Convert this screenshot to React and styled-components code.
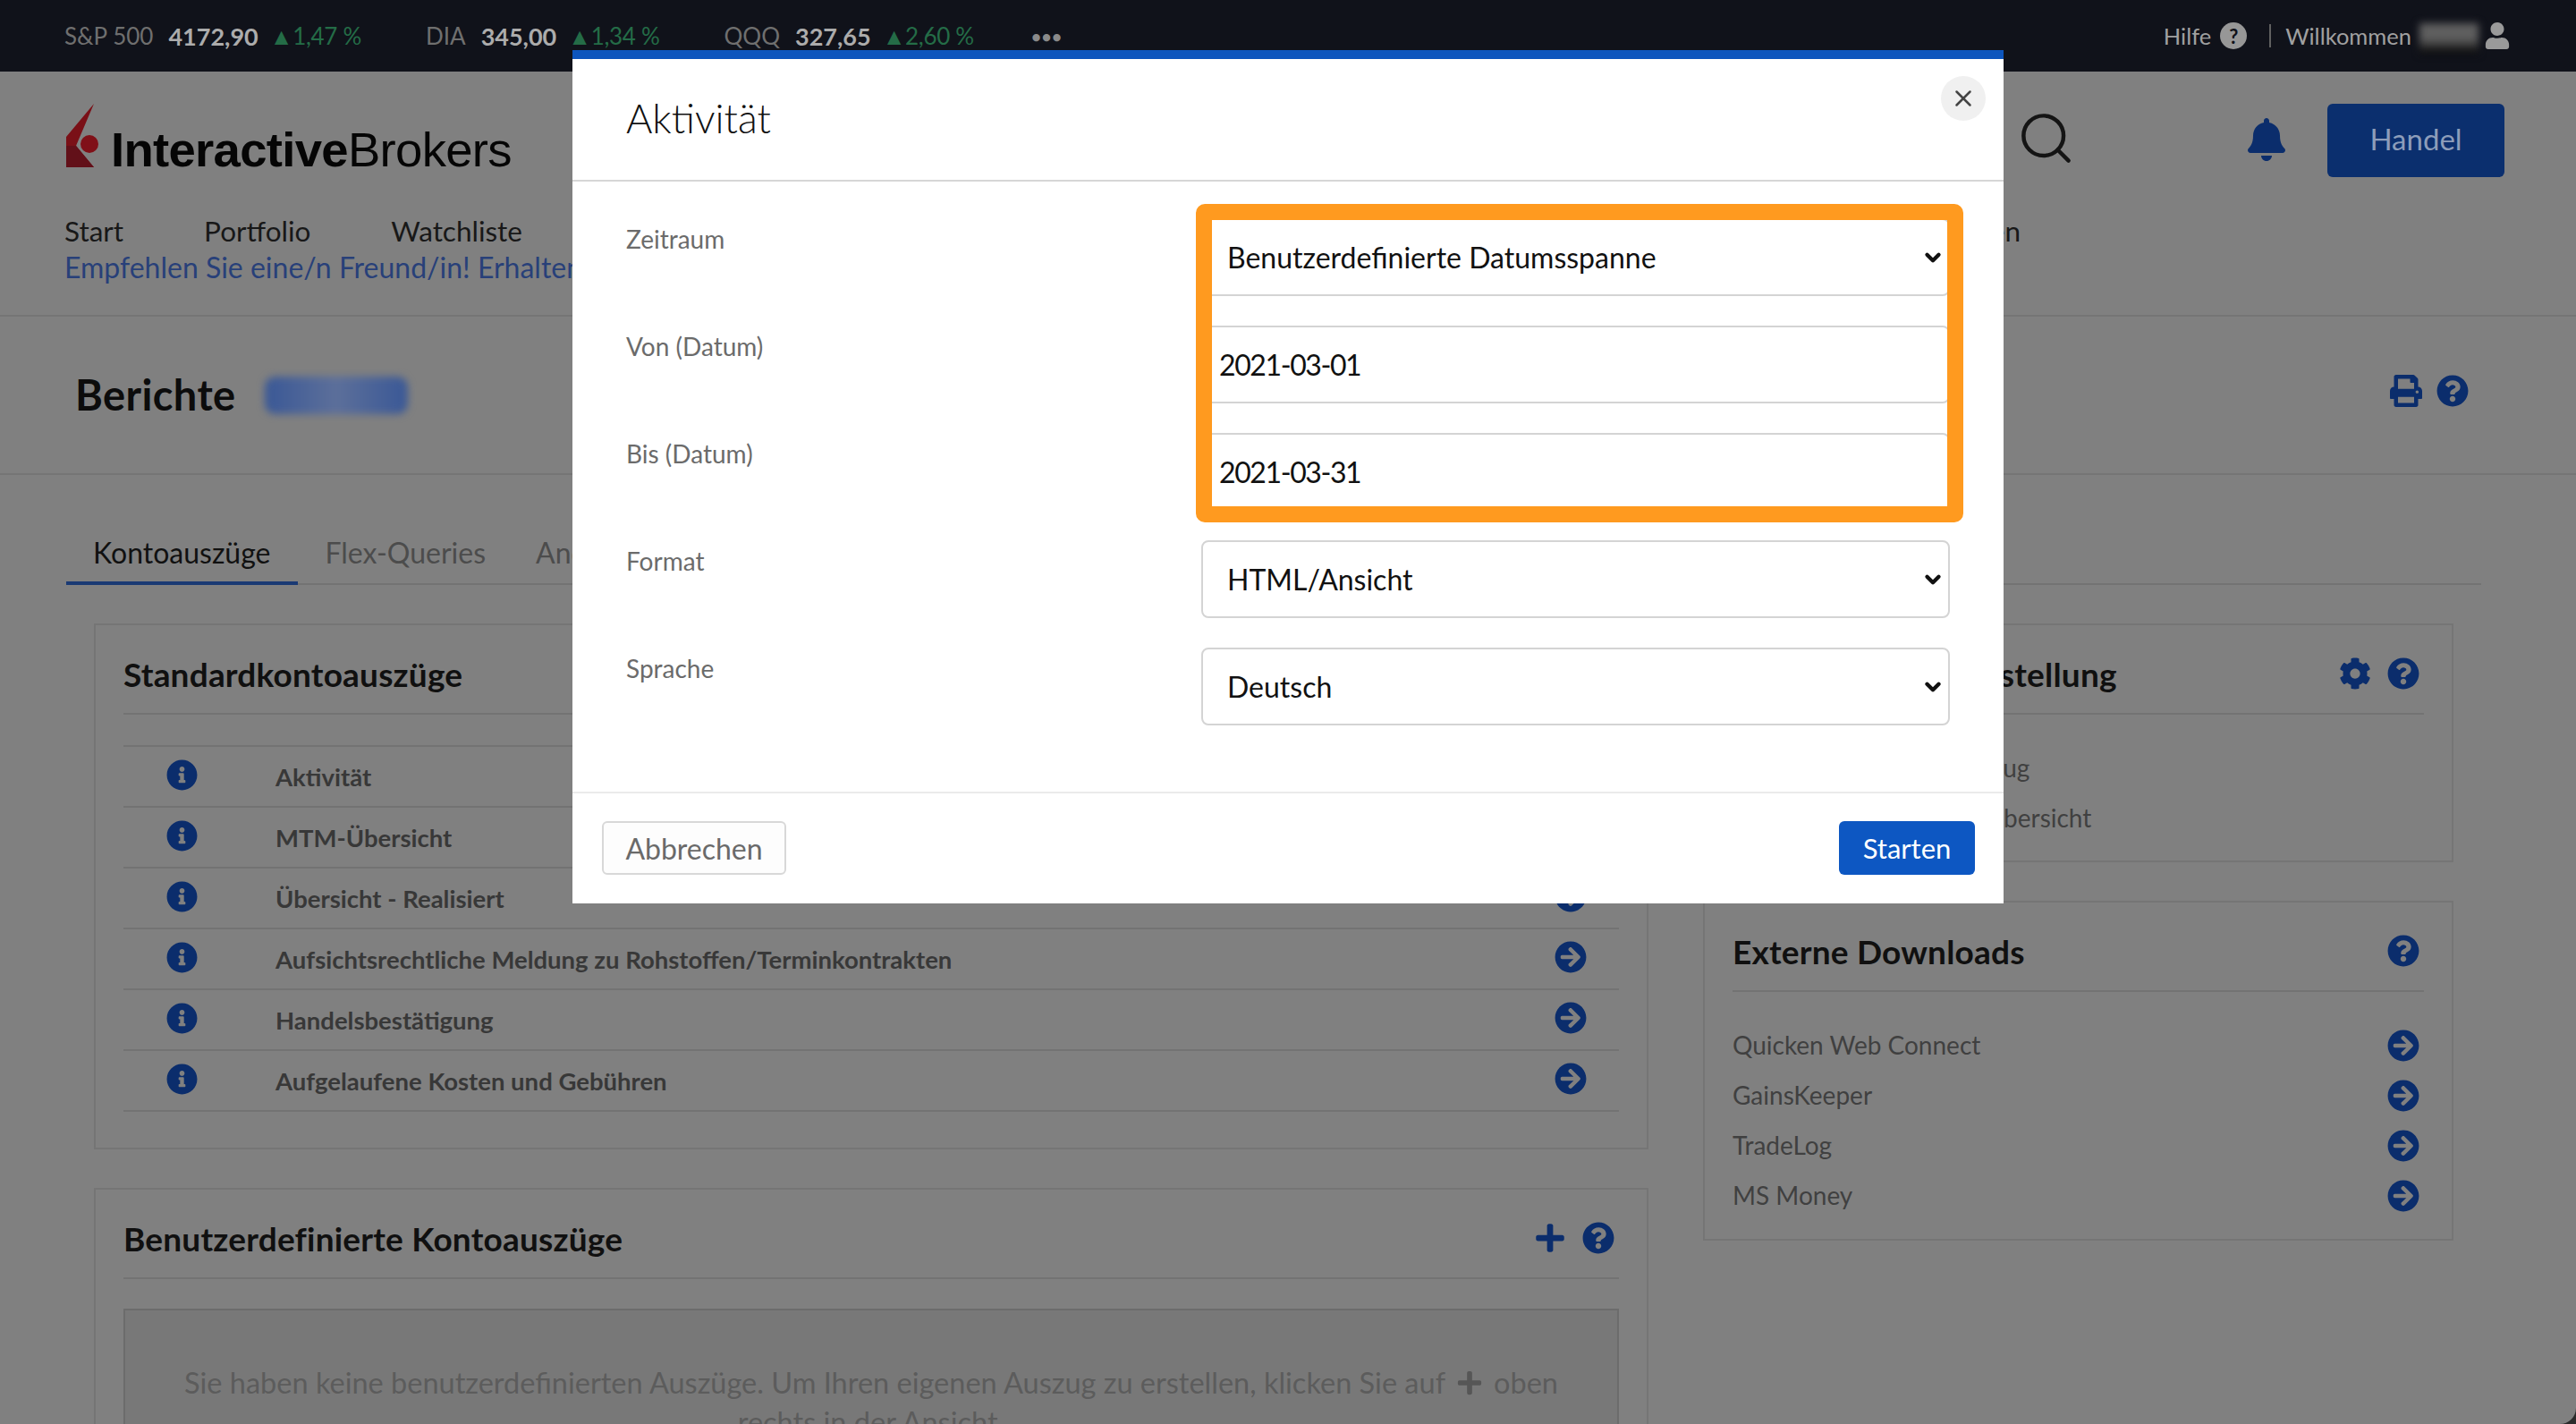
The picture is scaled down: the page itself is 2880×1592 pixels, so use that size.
import React from "react";
import styled, { createGlobalStyle } from "styled-components";
import {
  FaArrowCircleRight,
  FaBell,
  FaCog,
  FaInfoCircle,
  FaPlus,
  FaPrint,
  FaQuestionCircle,
  FaUser,
} from "react-icons/fa";
import { ChevronDown, Search, X } from "lucide-react";

const FONT = `Lato, "Open Sans", "Liberation Sans", sans-serif`;
const DIM_BLUE = "#0b2d6c";
const LINE = "#737373";

const GlobalStyle = createGlobalStyle`
  html, body {
    margin: 0;
    padding: 0;
    background: #2b2b2b;
  }
  * {
    box-sizing: border-box;
  }
`;

const Screen = styled.div`
  position: relative;
  width: 2880px;
  height: 1592px;
  overflow: hidden;
  background: #808080;
  border-bottom-right-radius: 18px;
  font-family: ${FONT};
`;

const TopBar = styled.div`
  display: flex;
  align-items: center;
  justify-content: space-between;
  height: 80px;
  padding: 0 73px 0 72px;
  background: #10121a;
  font-size: 26px;
`;

const Ticker = styled.div`
  display: flex;
  align-items: center;
`;

const TickerGroup = styled.div`
  display: flex;
  align-items: center;
  gap: 17px;
  margin-right: 72px;
`;

const Symbol = styled.span`
  color: #6f6f6f;
`;

const Price = styled.span`
  color: #acacac;
  font-size: 27px;
  font-weight: 700;
`;

const Change = styled.span`
  margin-left: -4px;
  color: #246c47;
  letter-spacing: -0.3px;
`;

const Dots = styled.span`
  margin-left: -8px;
  color: #8a8a8a;
  font-size: 19px;
  font-weight: 700;
  letter-spacing: 0.5px;
`;

const UserArea = styled.div`
  display: flex;
  align-items: center;
  color: #a0a0a0;
  font-size: 25.5px;
`;

const HelpBadge = styled.span`
  display: flex;
  align-items: center;
  justify-content: center;
  width: 30px;
  height: 30px;
  margin: 0 25px 0 10px;
  border-radius: 50%;
  background: #979797;
  color: #10121a;
  font-size: 22px;
  font-weight: 700;
`;

const Divider = styled.span`
  width: 2px;
  height: 26px;
  margin-right: 16px;
  background: #606060;
`;

const BlurredName = styled.span`
  width: 66px;
  height: 34px;
  margin: 6px 6px 0 9px;
  background: linear-gradient(#5f5f5f 50%, #050505);
  filter: blur(4px);
`;

const Header = styled.header`
  height: 274px;
  padding-top: 36px;
  border-bottom: 2px solid #757575;
`;

const HeaderTop = styled.div`
  display: flex;
  align-items: flex-start;
  padding: 0 80px 0 73px;
`;

const Logo = styled.div`
  display: flex;
  align-items: flex-end;
  flex: 1;
  height: 72px;
`;

const LogoText = styled.span`
  margin: 0 0 -7px 13px;
  color: #050505;
  font-family: "Liberation Sans", sans-serif;
  font-size: 54.5px;
  line-height: 1;
  letter-spacing: -0.7px;

  b {
    font-weight: 700;
  }
`;

const SearchIcon = styled(Search)`
  width: 67px;
  height: 67px;
  margin: 5px 0 0 0;
  color: #141414;
`;

const BellIcon = styled(FaBell)`
  width: 42px;
  height: 48px;
  margin: 16px 47px 0 192px;
  color: ${DIM_BLUE};
`;

const TradeButton = styled.button`
  width: 198px;
  height: 82px;
  padding: 0 0 4px;
  border: none;
  border-radius: 6px;
  background: #0b2f6e;
  color: #8d9dba;
  font-family: ${FONT};
  font-size: 33px;
`;

const Nav = styled.nav`
  display: flex;
  height: 41px;
  margin-top: 40px;
  padding: 0 621px 0 72px;
  color: #181818;
  font-size: 31.5px;
  line-height: 40px;
`;

const NavItem = styled.span`
  margin-right: ${(props) => props.$gap}px;

  &:last-child {
    margin: 0 0 0 auto;
  }
`;

const PromoLink = styled.a`
  display: block;
  padding-left: 72px;
  color: #284079;
  font-size: 32px;
  line-height: 40px;
  white-space: nowrap;
`;

const TitleRow = styled.div`
  display: flex;
  align-items: center;
  height: 177px;
  padding: 0 120px 0 84px;
  border-bottom: 2px solid #757575;
`;

const PageTitle = styled.h1`
  margin: -2px 32px 0 0;
  color: #0c0c0c;
  font-size: 47px;
  font-weight: 700;
  letter-spacing: 0.4px;
`;

const BlurredBadge = styled.span`
  width: 160px;
  height: 42px;
  border-radius: 12px;
  background: linear-gradient(90deg, #3a5896, #5c6f9a 50%, #3a5896);
  filter: blur(4px);
`;

const TitleIcons = styled.div`
  display: flex;
  align-items: center;
  gap: 16px;
  margin: 0 0 10px auto;
  color: ${DIM_BLUE};
  font-size: 36px;

  svg {
    display: block;
  }
`;

const Tabs = styled.div`
  display: flex;
  width: 2700px;
  height: 72px;
  margin: 51px 0 0 74px;
  border-bottom: 2px solid ${LINE};
`;

const Tab = styled.div`
  height: 72px;
  padding: 0 ${(props) => props.$right}px 0 30px;
  border-bottom: 4px solid ${(props) => (props.$active ? "#1a3a74" : "transparent")};
  color: ${(props) => (props.$active ? "#111111" : "#4c4c4c")};
  font-size: 32px;
  line-height: 72px;
`;

const Columns = styled.div`
  display: grid;
  grid-template-columns: 1738px 839px;
  gap: 61px;
  margin: 43px 0 0 105px;
`;

const Column = styled.div`
  display: flex;
  flex-direction: column;
  gap: 43px;
`;

const Card = styled.section`
  padding: 0 31px ${(props) => props.$bottom || 0}px;
  border: 2px solid #757575;
`;

const CardHeader = styled.div`
  display: flex;
  align-items: center;
  justify-content: space-between;
  height: 100px;
  padding: 10px 5px 0 0;
  border-bottom: 2px solid ${LINE};
`;

const CardTitle = styled.h2`
  margin: 0;
  color: #101010;
  font-size: 37px;
  font-weight: 700;
  letter-spacing: 0.2px;
`;

const CardIcons = styled.div`
  display: flex;
  align-items: center;
  gap: 18px;
  color: ${DIM_BLUE};
  font-size: 36px;

  svg {
    display: block;
  }
`;

const StatementList = styled.div`
  margin-top: 34px;
  border-top: 2px solid ${LINE};
`;

const StatementRow = styled.div`
  display: flex;
  align-items: center;
  height: 68px;
  padding: 0 36px 0 48px;
  border-bottom: 2px solid ${LINE};
  color: #383838;
  font-size: 27.5px;
  font-weight: 700;
`;

const InfoIcon = styled(FaInfoCircle)`
  flex: none;
  width: 35px;
  height: 35px;
  margin: -4px 87px 0 0;
  color: ${DIM_BLUE};
`;

const RowArrow = styled(FaArrowCircleRight)`
  flex: none;
  width: 36px;
  height: 36px;
  margin: ${(props) => props.$shift}px 0 0 auto;
  color: ${DIM_BLUE};
`;

const PlainList = styled.div`
  margin-top: 31px;
`;

const PlainRow = styled.div`
  display: flex;
  align-items: center;
  height: 56px;
  padding-right: 5px;
  color: #404040;
  font-size: 28px;
`;

const EmptyBox = styled.div`
  height: 300px;
  margin-top: 33px;
  padding: 59px 55px 0;
  border: 2px solid #6c6c6c;
  background: #787878;
  color: #5c5c5c;
  font-size: 32.5px;
  line-height: 44px;
  text-align: center;
`;

const InlinePlus = styled(FaPlus)`
  width: 30px;
  height: 30px;
  margin: 0 12px;
  vertical-align: -3px;
  color: #565656;
`;

const Modal = styled.div`
  position: absolute;
  top: 56px;
  left: 640px;
  display: flex;
  flex-direction: column;
  width: 1600px;
  height: 954px;
  border-top: 10px solid #0d55bd;
  background: #ffffff;
`;

const ModalHeader = styled.div`
  display: flex;
  align-items: center;
  flex: none;
  height: 137px;
  padding: 0 0 4px 60px;
  border-bottom: 2px solid #d6d6d6;
`;

const ModalTitle = styled.h2`
  margin: 0;
  color: #111111;
  font-size: 45px;
  font-weight: 300;
`;

const CloseButton = styled.button`
  position: absolute;
  top: 19px;
  right: 20px;
  display: flex;
  align-items: center;
  justify-content: center;
  width: 50px;
  height: 50px;
  padding: 0;
  border: none;
  border-radius: 50%;
  background: #f0f0f0;
  color: #444444;
`;

const ModalBody = styled.div`
  display: flex;
  flex: 1;
  flex-direction: column;
  gap: 33px;
  padding: 41px 60px 0 60px;
`;

const FormRow = styled.div`
  display: grid;
  grid-template-columns: 643px 837px;
`;

const FieldLabel = styled.label`
  margin-top: 3px;
  color: #6b6b6b;
  font-size: 28px;
  line-height: 40px;
`;

const SelectWrap = styled.div`
  position: relative;
`;

const Select = styled.select`
  display: block;
  width: 100%;
  height: 87px;
  padding: 0 50px 0 27px;
  border: 2px solid #d4d4d4;
  border-radius: 8px;
  outline: none;
  appearance: none;
  background: #ffffff;
  color: #111111;
  font-family: ${FONT};
  font-size: 32px;
`;

const SelectChevron = styled(ChevronDown)`
  position: absolute;
  top: 31px;
  right: 6px;
  width: 26px;
  height: 26px;
  color: #111111;
  pointer-events: none;
`;

const DateInput = styled.input`
  display: block;
  width: 100%;
  height: 87px;
  padding: 0 18px;
  border: 2px solid #d4d4d4;
  border-radius: 8px;
  outline: none;
  color: #111111;
  font-family: ${FONT};
  font-size: 32px;
  letter-spacing: -1.4px;
`;

const Highlight = styled.div`
  position: absolute;
  top: 162px;
  left: 697px;
  width: 858px;
  height: 356px;
  border: 18px solid #ff9a1f;
  border-radius: 10px;
  pointer-events: none;
`;

const ModalFooter = styled.div`
  display: flex;
  align-items: flex-start;
  justify-content: space-between;
  flex: none;
  height: 125px;
  padding: 31px 32px 0 33px;
  border-top: 2px solid #ebebeb;
`;

const CancelButton = styled.button`
  width: 206px;
  height: 60px;
  border: 2px solid #d8d8d8;
  border-radius: 6px;
  background: #fdfdfd;
  color: #6a6a6a;
  font-family: ${FONT};
  font-size: 32px;
`;

const StartButton = styled.button`
  width: 152px;
  height: 60px;
  border: none;
  border-radius: 6px;
  background: #0d57c2;
  color: #ffffff;
  font-family: ${FONT};
  font-size: 31px;
`;

const tickers = [
  { symbol: "S&P 500", price: "4172,90", change: "▲1,47 %" },
  { symbol: "DIA", price: "345,00", change: "▲1,34 %" },
  { symbol: "QQQ", price: "327,65", change: "▲2,60 %" },
];

const statements = [
  "Aktivität",
  "MTM-Übersicht",
  "Übersicht - Realisiert",
  "Aufsichtsrechtliche Meldung zu Rohstoffen/Terminkontrakten",
  "Handelsbestätigung",
  "Aufgelaufene Kosten und Gebühren",
];

const downloads = ["Quicken Web Connect", "GainsKeeper", "TradeLog", "MS Money"];

const LogoMark = () => (
  <svg width="38" height="72" viewBox="0 0 38 72">
    <path d="M32 0 1 37v34h31L12 47z" fill="#7a1017" />
    <path d="M1 71V47l11 0 20 24z" fill="#621019" />
    <circle cx="27" cy="45" r="10" fill="#801018" />
  </svg>
);

const App = () => {
  return (
    <Screen>
      <GlobalStyle />
      <TopBar>
        <Ticker>
          {tickers.map((t) => (
            <TickerGroup key={t.symbol}>
              <Symbol>{t.symbol}</Symbol>
              <Price>{t.price}</Price>
              <Change>{t.change}</Change>
            </TickerGroup>
          ))}
          <Dots>•••</Dots>
        </Ticker>
        <UserArea>
          Hilfe
          <HelpBadge>?</HelpBadge>
          <Divider />
          Willkommen
          <BlurredName />
          <FaUser size={30} color="#9a9a9a" />
        </UserArea>
      </TopBar>

      <Header>
        <HeaderTop>
          <Logo>
            <LogoMark />
            <LogoText>
              <b>Interactive</b>Brokers
            </LogoText>
          </Logo>
          <SearchIcon strokeWidth={1.6} />
          <BellIcon />
          <TradeButton>Handel</TradeButton>
        </HeaderTop>
        <Nav>
          <NavItem $gap={90}>Start</NavItem>
          <NavItem $gap={90}>Portfolio</NavItem>
          <NavItem $gap={90}>Watchliste</NavItem>
          <NavItem>Informationen</NavItem>
        </Nav>
        <PromoLink>Empfehlen Sie eine/n Freund/in! Erhalten Sie bis zu 1.000 USD</PromoLink>
      </Header>

      <TitleRow>
        <PageTitle>Berichte</PageTitle>
        <BlurredBadge />
        <TitleIcons>
          <FaPrint />
          <FaQuestionCircle />
        </TitleIcons>
      </TitleRow>

      <Tabs>
        <Tab $active $right={31}>Kontoauszüge</Tab>
        <Tab $right={26}>Flex-Queries</Tab>
        <Tab $right={30}>Andere Berichte</Tab>
      </Tabs>

      <Columns>
        <Column>
          <Card $bottom={40}>
            <CardHeader>
              <CardTitle>Standardkontoauszüge</CardTitle>
            </CardHeader>
            <StatementList>
              {statements.map((name) => (
                <StatementRow key={name}>
                  <InfoIcon />
                  {name}
                  <RowArrow $shift={-4} />
                </StatementRow>
              ))}
            </StatementList>
          </Card>
          <Card>
            <CardHeader>
              <CardTitle>Benutzerdefinierte Kontoauszüge</CardTitle>
              <CardIcons>
                <FaPlus />
                <FaQuestionCircle />
              </CardIcons>
            </CardHeader>
            <EmptyBox>
              Sie haben keine benutzerdefinierten Auszüge. Um Ihren eigenen Auszug zu erstellen, klicken Sie auf
              <InlinePlus />
              oben rechts in der Ansicht.
            </EmptyBox>
          </Card>
        </Column>

        <Column>
          <Card $bottom={20}>
            <CardHeader>
              <CardTitle>Kontoauszugs-Einstellung</CardTitle>
              <CardIcons>
                <FaCog />
                <FaQuestionCircle />
              </CardIcons>
            </CardHeader>
            <PlainList>
              <PlainRow>Vollständige Jahres-Auszug</PlainRow>
              <PlainRow>Positionen- und Kostenübersicht</PlainRow>
            </PlainList>
          </Card>
          <Card $bottom={21}>
            <CardHeader>
              <CardTitle>Externe Downloads</CardTitle>
              <CardIcons>
                <FaQuestionCircle />
              </CardIcons>
            </CardHeader>
            <PlainList>
              {downloads.map((name) => (
                <PlainRow key={name}>
                  {name}
                  <RowArrow $shift={2} />
                </PlainRow>
              ))}
            </PlainList>
          </Card>
        </Column>
      </Columns>

      <Modal>
        <ModalHeader>
          <ModalTitle>Aktivität</ModalTitle>
        </ModalHeader>
        <CloseButton>
          <X size={30} strokeWidth={2} />
        </CloseButton>
        <ModalBody>
          <FormRow>
            <FieldLabel>Zeitraum</FieldLabel>
            <SelectWrap>
              <Select defaultValue="custom">
                <option value="custom">Benutzerdefinierte Datumsspanne</option>
              </Select>
              <SelectChevron strokeWidth={4} />
            </SelectWrap>
          </FormRow>
          <FormRow>
            <FieldLabel>Von (Datum)</FieldLabel>
            <DateInput defaultValue="2021-03-01" />
          </FormRow>
          <FormRow>
            <FieldLabel>Bis (Datum)</FieldLabel>
            <DateInput defaultValue="2021-03-31" />
          </FormRow>
          <FormRow>
            <FieldLabel>Format</FieldLabel>
            <SelectWrap>
              <Select defaultValue="html">
                <option value="html">HTML/Ansicht</option>
              </Select>
              <SelectChevron strokeWidth={4} />
            </SelectWrap>
          </FormRow>
          <FormRow>
            <FieldLabel>Sprache</FieldLabel>
            <SelectWrap>
              <Select defaultValue="de">
                <option value="de">Deutsch</option>
              </Select>
              <SelectChevron strokeWidth={4} />
            </SelectWrap>
          </FormRow>
        </ModalBody>
        <Highlight />
        <ModalFooter>
          <CancelButton>Abbrechen</CancelButton>
          <StartButton>Starten</StartButton>
        </ModalFooter>
      </Modal>
    </Screen>
  );
};

export default App;
